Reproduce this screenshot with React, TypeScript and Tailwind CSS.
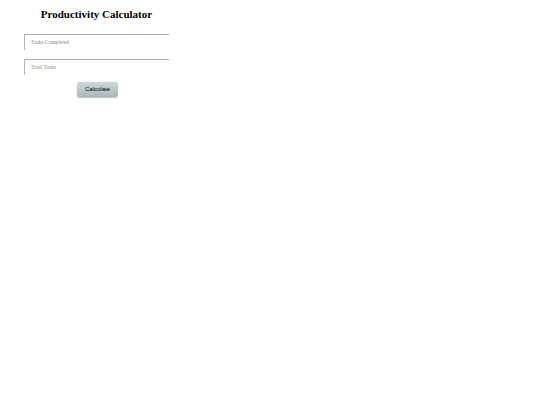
export default function App() {
  return (
    <div className="w-[540px] h-[405px] bg-white" style={{ fontFamily: '"Liberation Serif", serif' }}>
      <div className="w-[145px] ml-[24px] pt-[8px] flex flex-col items-center">
        <h1 className="text-[11px] leading-[13px] font-bold text-black whitespace-nowrap" style={{ fontFamily: '"Liberation Serif", serif' }}>
          Productivity Calculator
        </h1>
        <div className="w-full mt-[13px] h-[16px] border-t border-l border-t-[#a9a9a9] border-l-[#b5b5b5] flex items-center pl-[6px]">
          <span className="text-[5.5px] text-[#8a8a8a]">Tasks Completed</span>
        </div>
        <div className="w-full mt-[9px] h-[16px] border-t border-l border-t-[#a9a9a9] border-l-[#b5b5b5] flex items-center pl-[6px]">
          <span className="text-[5.5px] text-[#8a8a8a]">Total Tasks</span>
        </div>
        <button className="mt-[7px] ml-[2px] w-[41px] h-[15px] rounded-[2px] bg-gradient-to-b from-[#cdd8d8] to-[#a9b9b9] shadow-[0_0.5px_1px_rgba(0,0,0,0.25)] flex items-center justify-center">
          <span className="text-[6px] text-black" style={{ fontFamily: '"Liberation Sans", sans-serif' }}>Calculate</span>
        </button>
      </div>
    </div>
  );
}
